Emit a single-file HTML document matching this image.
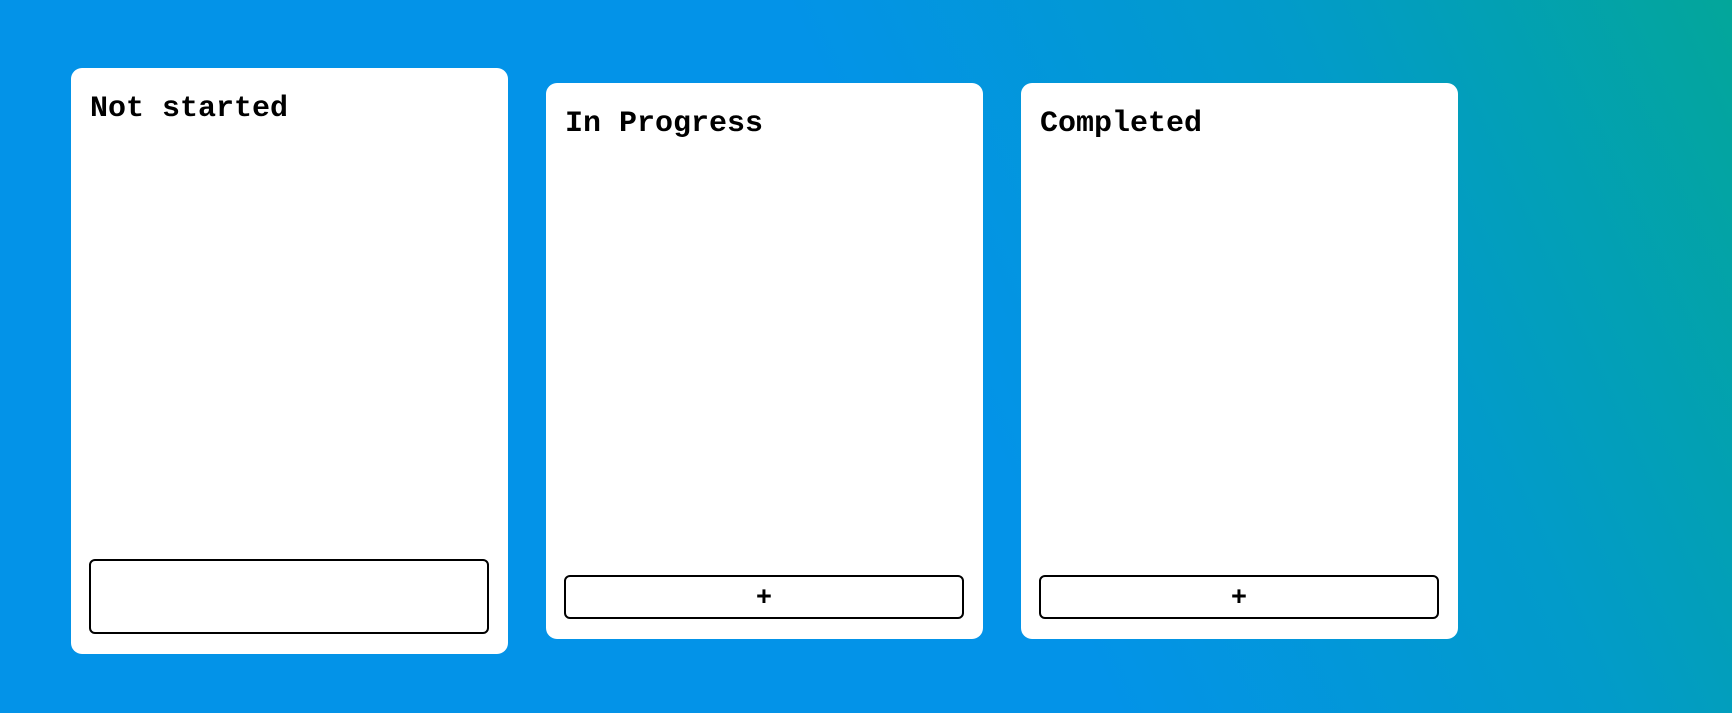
<!DOCTYPE html>
<html><head><style>
html,body{margin:0;padding:0;width:1732px;height:713px;overflow:hidden;}
body{background:linear-gradient(245deg,#03a69a 0%,#029bca 22%,#0393e8 46%,#0393e8 100%);position:relative;font-family:"Liberation Mono",monospace;}
.card{position:absolute;background:#fff;border-radius:11px;}
.t{position:absolute;left:19px;font-weight:bold;font-size:30px;color:#000;line-height:1;}
.btn{position:absolute;left:18px;right:19px;border:2px solid #000;border-radius:6px;box-sizing:border-box;text-align:center;font-weight:bold;font-size:27px;color:#000;}
</style></head><body>
<div class="card" style="left:71px;top:68px;width:437px;height:586px">
 <div class="t" style="top:26px">Not started</div>
 <div class="btn" style="top:491px;height:75px"></div>
</div>
<div class="card" style="left:546px;top:83px;width:437px;height:556px">
 <div class="t" style="top:26px">In Progress</div>
 <div class="btn" style="top:492px;height:44px;line-height:44px">+</div>
</div>
<div class="card" style="left:1021px;top:83px;width:437px;height:556px">
 <div class="t" style="top:26px">Completed</div>
 <div class="btn" style="top:492px;height:44px;line-height:44px">+</div>
</div>
</body></html>
